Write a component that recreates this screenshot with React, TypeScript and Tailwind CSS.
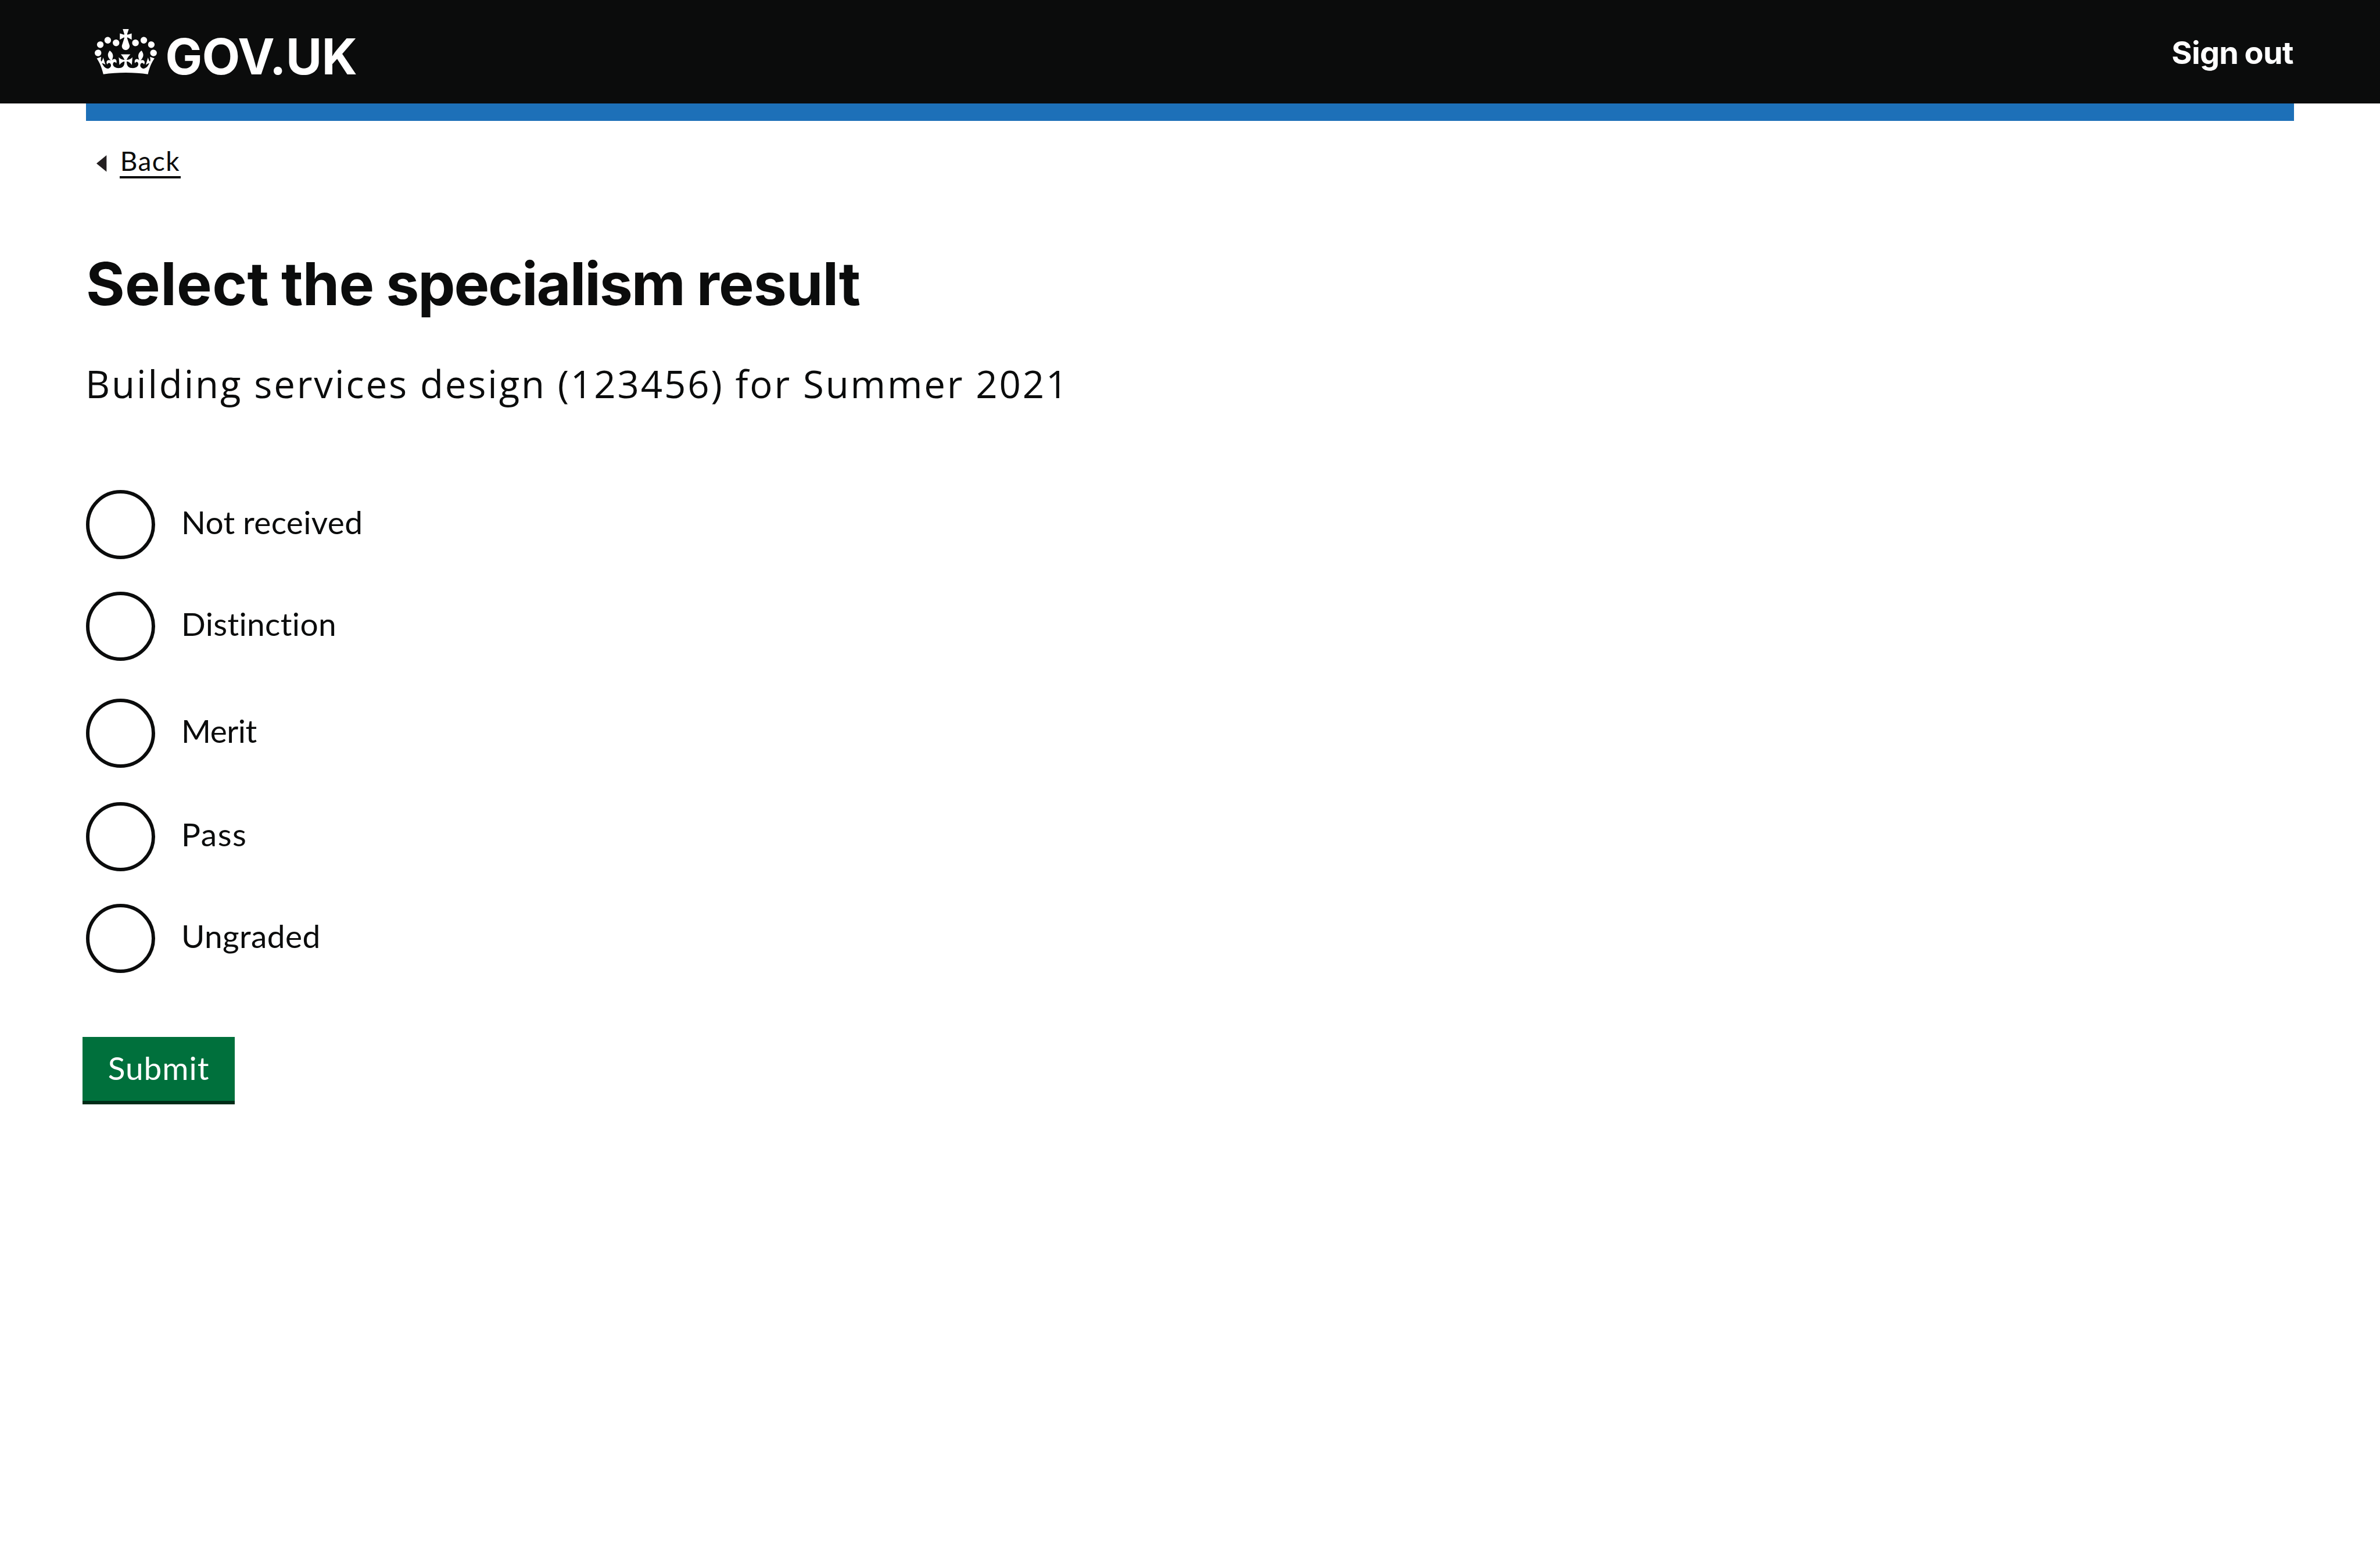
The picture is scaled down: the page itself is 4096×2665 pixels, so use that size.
import React from "react";

const CROWN =
  "M25 30.2c3.5 1.5 7.7-.2 9.1-3.7 1.5-3.6-.2-7.8-3.9-9.2-3.6-1.4-7.6.3-9.1 3.9-1.4 3.5.3 7.5 3.9 9zM9 39.5c3.6 1.5 7.8-.2 9.2-3.7 1.5-3.6-.2-7.8-3.9-9.1-3.6-1.5-7.6.2-9.1 3.8-1.4 3.5.3 7.5 3.8 9zM4.4 57.2c3.5 1.5 7.7-.2 9.1-3.8 1.5-3.6-.2-7.7-3.9-9.1-3.5-1.5-7.6.3-9.1 3.8-1.4 3.5.3 7.6 3.9 9.1zm38.3-21.4c3.5 1.5 7.7-.2 9.1-3.8 1.5-3.6-.2-7.7-3.9-9.1-3.6-1.5-7.6.3-9.1 3.8-1.3 3.6.4 7.7 3.9 9.1zm64.4-5.6c-3.6 1.5-7.8-.2-9.1-3.7-1.5-3.6.2-7.8 3.8-9.2 3.6-1.4 7.7.3 9.2 3.9 1.3 3.5-.4 7.5-3.9 9zm15.9 9.3c-3.6 1.5-7.7-.2-9.1-3.7-1.5-3.6.2-7.8 3.7-9.1 3.6-1.5 7.7.2 9.2 3.8 1.5 3.5-.3 7.5-3.8 9zm4.7 17.7c-3.6 1.5-7.8-.2-9.2-3.8-1.5-3.6.2-7.7 3.9-9.1 3.6-1.5 7.7.3 9.2 3.8 1.3 3.5-.4 7.6-3.9 9.1zM89.3 35.8c-3.6 1.5-7.8-.2-9.2-3.8-1.4-3.6.2-7.7 3.9-9.1 3.6-1.5 7.7.3 9.2 3.8 1.4 3.6-.3 7.7-3.9 9.1zM69.7 17.7l8.9 4.7V9.3l-8.9 2.8c-.2-.3-.5-.6-.9-.9L72.4 0H59.6l3.5 11.2c-.3.3-.6.5-.9.9l-8.8-2.8v13.1l8.8-4.7c.3.3.6.7.9.9l-5 15.4v.1c-.2.8-.4 1.6-.4 2.4 0 4.1 3.1 7.5 7 8.1h.2c.3 0 .7.1 1 .1.4 0 .7 0 1-.1h.2c4-.6 7.1-4.1 7.1-8.1 0-.8-.1-1.7-.4-2.4V34l-5.1-15.4c.4-.2.7-.6 1-.9zM66 92.8c16.9 0 32.8 1.1 47.1 3.2 4-16.9 8.9-26.7 14-33.5l-9.6-3.4c1 4.9 1.1 7.2 0 10.2-1.5-1.4-3-4.3-4.2-8.7L108.6 76c2.8-2 5-3.2 7.5-3.3-4.4 9.4-10 11.9-13.6 11.2-4.3-.8-6.3-4.6-5.6-7.9 1-4.7 5.7-5.9 8-.5 4.3-8.7-3-11.4-7.6-8.8 7.1-7.2 7.9-13.5 2.1-21.1-8 6.1-8.1 12.3-4.5 20.8-4.7-5.4-12.1-2.5-9.5 6.2 3.4-5.2 7.9-2 7.2 3.1-.6 4.3-6.4 7.8-13.5 7.2-10.3-.9-10.9-8-11.2-13.8 2.5-.5 7.1 1.8 11 7.3L80.2 60c-4.1 4.4-8 5.3-12.3 5.4 1.4-4.4 8-11.6 8-11.6H55.5s6.4 7.2 7.9 11.6c-4.2-.1-8-1-12.3-5.4l1.4 16.4c3.9-5.5 8.5-7.7 10.9-7.3-.3 5.8-.9 12.8-11.1 13.8-7.2.6-12.9-2.9-13.5-7.2-.7-5 3.8-8.3 7.1-3.1 2.7-8.7-4.6-11.6-9.4-6.2 3.7-8.5 3.6-14.7-4.6-20.8-5.8 7.6-5 13.9 2.2 21.1-4.7-2.6-11.9.1-7.7 8.8 2.3-5.5 7.1-4.2 8.1.5.7 3.3-1.3 7.1-5.7 7.9-3.5.7-9-1.8-13.5-11.2 2.5.1 4.7 1.3 7.5 3.3l-4.7-15.4c-1.2 4.4-2.7 7.2-4.3 8.7-1.1-3-.9-5.3 0-10.2l-9.5 3.4c5 6.9 9.9 16.7 14 33.5 14.8-2.1 30.8-3.2 47.7-3.2z";

const OPTIONS = [
  { label: "Not received", gap: "", tracking: "tracking-[0.37px]" },
  { label: "Distinction", gap: "mt-[56px]", tracking: "tracking-[0.37px]" },
  { label: "Merit", gap: "mt-[65px]", tracking: "tracking-[-0.5px]" },
  { label: "Pass", gap: "mt-[59px]", tracking: "tracking-[1.6px]" },
  { label: "Ungraded", gap: "mt-[56px]", tracking: "tracking-[0.4px]" },
];

export default function App() {
  return (
    <div className="flex min-h-[2665px] w-full flex-col bg-white text-[#0b0c0c]">
      <header className="flex h-[178px] items-start justify-between bg-[#0b0c0c] pr-[149px] pl-[163px] text-white">
        <a className="flex items-start">
          <svg viewBox="0 0 132 97" className="mt-[49.7px] h-[78.5px] w-[106.9px] fill-white">
            <path fillRule="evenodd" d={CROWN} />
          </svg>
          <span className="mt-[45.6px] ml-[14.5px] font-['Inter',sans-serif] text-[84.9px] leading-[102px] font-bold tracking-[-0.42px]">
            GOV.UK
          </span>
        </a>
        <a className="mt-[58px] font-['Inter',sans-serif] text-[53.9px] leading-[65px] font-bold tracking-[-0.6px] [word-spacing:-2px]">
          Sign out
        </a>
      </header>
      <div className="mx-[148.4px] h-[30px] bg-[#1d70b8]" />

      <main className="flex flex-col items-start pl-[148px]">
        <a className="mt-[41px] flex items-start pl-[18.4px]">
          <svg
            viewBox="0 0 17 29"
            preserveAspectRatio="none"
            className="mt-[18.4px] mr-[22px] h-[28.6px] w-[17.4px] fill-[#231f20]"
          >
            <path d="M0 14.5 17 0V29Z" />
          </svg>
          <span className="h-[58px] border-b-4 border-[#0b0c0c] pr-px pl-px font-['Lato',sans-serif] text-[46px] leading-[56px] tracking-[1.4px]">
            Back
          </span>
        </a>

        <h1 className="mt-[119.4px] font-['Inter',sans-serif] text-[102px] leading-[124px] font-bold tracking-[-0.9px] [word-spacing:-2.3px]">
          <span className="tracking-[0.3px]">Select</span> the <span className="tracking-[-2.1px]">specialism</span>{" "}
          <span>result</span>
        </h1>
        <p className="mt-[65px] -ml-px font-['Open_Sans',sans-serif] text-[65.3px] leading-[89px] tracking-[2.9px]">
          Building services design (123456) for Summer 2021
        </p>

        <form className="mt-[138.5px] flex flex-col items-start">
          {OPTIONS.map((o) => (
            <label key={o.label} className={`flex items-start ${o.gap}`}>
              <span className="size-[119px] rounded-full border-6 border-[#0b0c0c]" />
              <span
                className={`mt-[22px] ml-[45px] font-['Lato',sans-serif] text-[55px] leading-[66px] [word-spacing:-1.1px] ${o.tracking}`}
              >
                {o.label}
              </span>
            </label>
          ))}
          <button className="mt-[110px] -ml-[6px] flex h-[116px] w-[262px] justify-center border-b-6 border-[#002d18] bg-[#00703c] pt-[20px] font-['Lato',sans-serif] text-[55px] leading-[66px] tracking-[0.97px] text-white">
            Submit
          </button>
        </form>
      </main>
    </div>
  );
}
